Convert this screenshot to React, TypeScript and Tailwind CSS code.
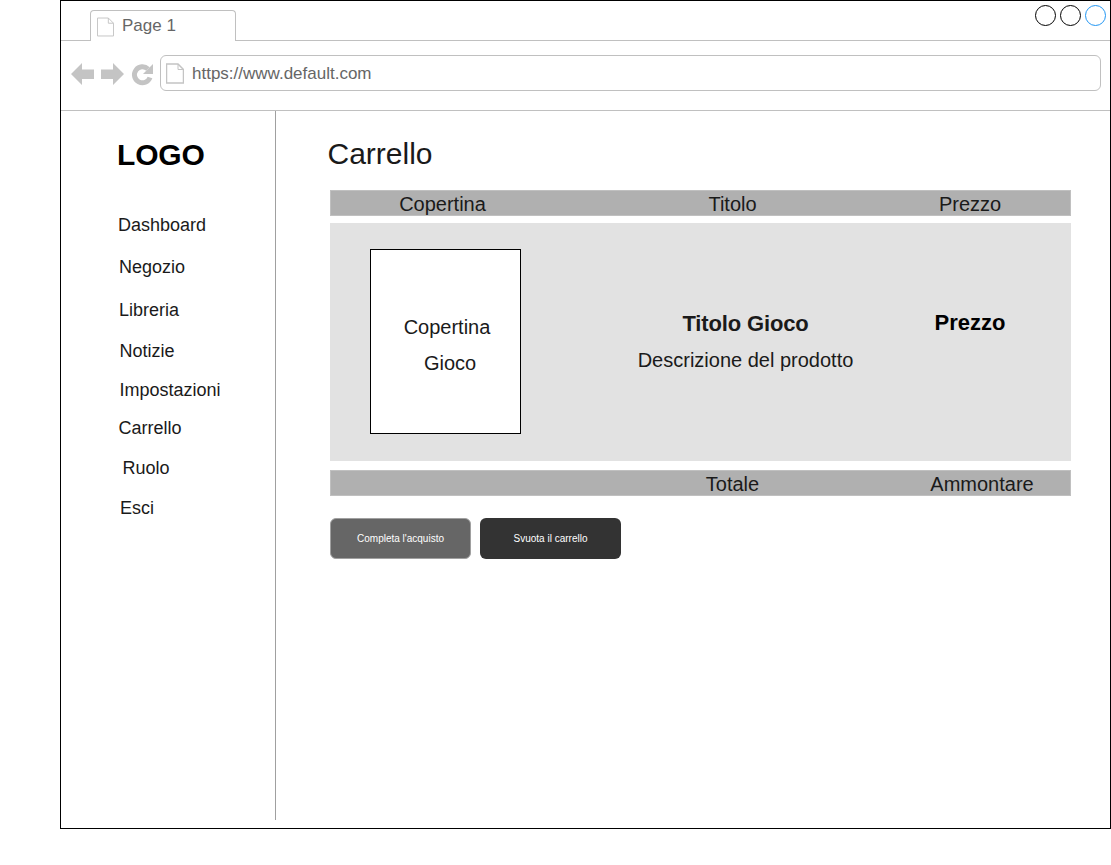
import React from "react";

function PageIcon({ className, sw = 1 }: { className: string; sw?: number }) {
  return (
    <svg className={className} viewBox="0 0 18 20" fill="none">
      <path d="M0.5 0.5H12L17.5 6V19.5H0.5Z" fill="#fff" stroke="#c4c4c4" strokeWidth={sw} />
      <path d="M12 0.5V6H17.5" stroke="#c4c4c4" strokeWidth="1" />
    </svg>
  );
}

const nav = [
  { label: "Dashboard", cls: "mt-[42px] ml-[57px]" },
  { label: "Negozio", cls: "mt-[22px] ml-[58px]" },
  { label: "Libreria", cls: "mt-[23px] ml-[58px]" },
  { label: "Notizie", cls: "mt-[21px] ml-[58.500px]" },
  { label: "Impostazioni", cls: "mt-[19px] ml-[58.500px]" },
  { label: "Carrello", cls: "mt-[18px] ml-[57.500px]" },
  { label: "Ruolo", cls: "mt-[20px] ml-[61.500px]" },
  { label: "Esci", cls: "mt-[20px] ml-[59px]" },
];

export default function App() {
  return (
    <div className="w-[1111px] h-[865px] bg-white overflow-hidden font-['Liberation_Sans',Arial,sans-serif]">
      <div className="ml-[60px] w-[1051px] h-[829px] border border-black flex flex-col">
        <div className="relative h-[40px] border-b border-[#c0c0c0] shrink-0">
          <div className="ml-[29px] mt-[9px] w-[146px] h-[31px] border border-b-0 border-[#c0c0c0] rounded-t-[4px] bg-white flex items-center">
            <PageIcon className="w-[17px] h-[20px] ml-[6px] mt-[2px]" />
            <span className="ml-[8px] text-[17px] leading-[20px] text-[#666666] -mt-[1px]">Page 1</span>
          </div>
          <div className="absolute right-[4px] top-[4px] flex gap-[4px]">
            <div className="w-[21px] h-[21px] rounded-full border border-black" />
            <div className="w-[21px] h-[21px] rounded-full border border-black" />
            <div className="w-[21px] h-[21px] rounded-full border border-[#2196f3]" />
          </div>
        </div>
        <div className="h-[70px] border-b border-[#c0c0c0] flex items-center shrink-0 pb-[5px]">
          <svg className="ml-[10px] w-[84px] h-[26px] shrink-0 mt-[1px]" viewBox="0 0 84 26">
            <path d="M0 13L11 2V8.500H23V18H11V24Z" fill="#c4c4c4" />
            <path d="M53 13L42 2V8.500H30V18H42V24Z" fill="#c4c4c4" />
            <path d="M79 16.500A8 8 0 1 1 77 8" fill="none" stroke="#c4c4c4" strokeWidth="5" />
            <path d="M82 3V13H72Z" fill="#c4c4c4" />
          </svg>
          <div className="ml-[5px] w-[941px] h-[36px] border border-[#c0c0c0] rounded-[6px] flex items-center">
            <PageIcon className="w-[18px] h-[21px] ml-[5px]" sw={1.500} />
            <span className="ml-[8px] mt-[1px] text-[17px] text-[#666666]">https://www.default.com</span>
          </div>
        </div>
        <div className="flex flex-1 min-h-0">
          <aside className="w-[215px] h-[709px] border-r border-[#a0a0a0] flex flex-col shrink-0">
            <div className="mt-[26px] ml-[56px] text-[30px] leading-[36px] font-bold text-black tracking-[-0.2px]">LOGO</div>
            {nav.map((n) => (
              <div key={n.label} className={`${n.cls} text-[18px] leading-[20px] text-[#1a1a1a]`}>
                {n.label}
              </div>
            ))}
          </aside>
          <main className="flex-1 pl-[54px]">
            <h1 className="mt-[25px] ml-[-2.500px] text-[30px] leading-[36px] text-[#1a1a1a]">Carrello</h1>
            <div className="mt-[18px] w-[741px] h-[26px] bg-[#b0b0b0] border border-[#c0c0c0] flex items-center pt-[2px] text-[20px] text-[#1a1a1a]">
              <span className="w-[223px] text-center">Copertina</span>
              <span className="w-[357px] text-center">Titolo</span>
              <span className="w-[118px] text-center">Prezzo</span>
            </div>
            <div className="mt-[7px] w-[741px] h-[238px] bg-[#e2e2e2] flex text-[#1a1a1a]">
              <div className="ml-[40px] mt-[26px] w-[151px] h-[185px] bg-white border border-black flex flex-col items-center text-[20px] leading-[36px] pt-[59px]">
                <span className="ml-[3px]">Copertina</span>
                <span className="ml-[9px]">Gioco</span>
              </div>
              <div className="w-[449px] flex flex-col items-center pt-[86px]">
                <span className="text-[22px] leading-[30px] font-bold tracking-[-0.15px]">Titolo Gioco</span>
                <span className="mt-[6px] text-[20px] leading-[30px]">Descrizione del prodotto</span>
              </div>
              <div className="w-[0px] flex justify-center pt-[86px]">
                <span className="text-[22px] leading-[28px] font-bold text-black whitespace-nowrap">Prezzo</span>
              </div>
            </div>
            <div className="mt-[9px] w-[741px] h-[26px] bg-[#b0b0b0] border border-[#c0c0c0] flex items-center pt-[2px] text-[20px] text-[#1a1a1a]">
              <span className="w-[223px]" />
              <span className="w-[357px] text-center">Totale</span>
              <span className="w-[142px] text-center">Ammontare</span>
            </div>
            <div className="mt-[22px] flex gap-[9px] text-[10px] text-white">
              <button className="w-[141px] h-[41px] rounded-[6px] bg-[#666666] border border-[#a0a0a0] flex items-center justify-center">Completa l'acquisto</button>
              <button className="w-[141px] h-[41px] rounded-[6px] bg-[#333333] flex items-center justify-center">Svuota il carrello</button>
            </div>
          </main>
        </div>
      </div>
    </div>
  );
}
